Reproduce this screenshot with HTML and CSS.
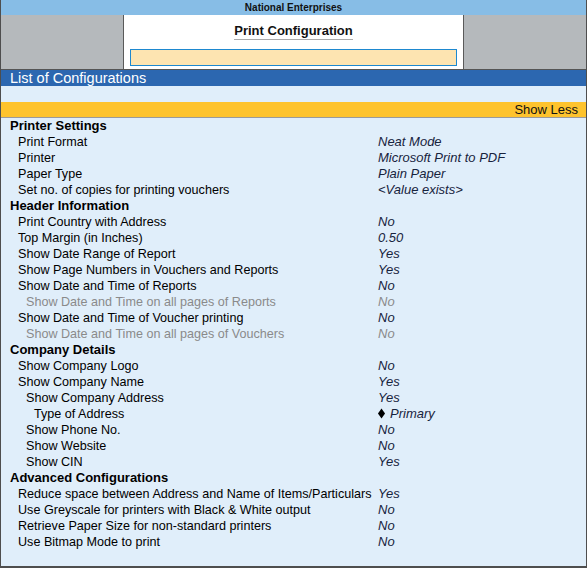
FILE: index.html
```html
<!DOCTYPE html>
<html>
<head>
<meta charset="utf-8">
<link rel="stylesheet" href="styles.css">
</head>
<body>
<div class="app">
  <div class="topbar">National Enterprises</div>
  <div class="titlearea">
    <div class="side"></div>
    <div class="panel">
      <div class="title"><span>Print Configuration</span></div>
      <div class="input"></div>
    </div>
    <div class="side"></div>
  </div>
  <div class="listhead">List of Configurations</div>
  <div class="blank"></div>
  <div class="showless">Show Less</div>
  <div class="rows">
    <div class="row sec"><span class="lbl">Printer Settings</span><span class="val"></span></div>
    <div class="row l1"><span class="lbl">Print Format</span><span class="val">Neat Mode</span></div>
    <div class="row l1"><span class="lbl">Printer</span><span class="val">Microsoft Print to PDF</span></div>
    <div class="row l1"><span class="lbl">Paper Type</span><span class="val">Plain Paper</span></div>
    <div class="row l1"><span class="lbl">Set no. of copies for printing vouchers</span><span class="val">&lt;Value exists&gt;</span></div>
    <div class="row sec"><span class="lbl">Header Information</span><span class="val"></span></div>
    <div class="row l1"><span class="lbl">Print Country with Address</span><span class="val">No</span></div>
    <div class="row l1"><span class="lbl">Top Margin (in Inches)</span><span class="val">0.50</span></div>
    <div class="row l1"><span class="lbl">Show Date Range of Report</span><span class="val">Yes</span></div>
    <div class="row l1"><span class="lbl">Show Page Numbers in Vouchers and Reports</span><span class="val">Yes</span></div>
    <div class="row l1"><span class="lbl">Show Date and Time of Reports</span><span class="val">No</span></div>
    <div class="row l2 dis"><span class="lbl">Show Date and Time on all pages of Reports</span><span class="val">No</span></div>
    <div class="row l1"><span class="lbl">Show Date and Time of Voucher printing</span><span class="val">No</span></div>
    <div class="row l2 dis"><span class="lbl">Show Date and Time on all pages of Vouchers</span><span class="val">No</span></div>
    <div class="row sec"><span class="lbl">Company Details</span><span class="val"></span></div>
    <div class="row l1"><span class="lbl">Show Company Logo</span><span class="val">No</span></div>
    <div class="row l1"><span class="lbl">Show Company Name</span><span class="val">Yes</span></div>
    <div class="row l2"><span class="lbl">Show Company Address</span><span class="val">Yes</span></div>
    <div class="row l3"><span class="lbl">Type of Address</span><span class="val"><span class="dia"></span>Primary</span></div>
    <div class="row l2"><span class="lbl">Show Phone No.</span><span class="val">No</span></div>
    <div class="row l2"><span class="lbl">Show Website</span><span class="val">No</span></div>
    <div class="row l2"><span class="lbl">Show CIN</span><span class="val">Yes</span></div>
    <div class="row sec"><span class="lbl">Advanced Configurations</span><span class="val"></span></div>
    <div class="row l1"><span class="lbl">Reduce space between Address and Name of Items/Particulars</span><span class="val">Yes</span></div>
    <div class="row l1"><span class="lbl">Use Greyscale for printers with Black &amp; White output</span><span class="val">No</span></div>
    <div class="row l1"><span class="lbl">Retrieve Paper Size for non-standard printers</span><span class="val">No</span></div>
    <div class="row l1"><span class="lbl">Use Bitmap Mode to print</span><span class="val">No</span></div>
  </div>
</div>
</body>
</html>
```

FILE: styles.css
```css
html, body {
  margin: 0;
  padding: 0;
}
body {
  font-family: "Liberation Sans", Arial, sans-serif;
  font-size: 12.6px;
  color: #000;
  background: #e0eefa;
}
.app {
  width: 587px;
  height: 568px;
  box-sizing: border-box;
  border-left: 1px solid #4e4e4e;
  border-right: 1px solid #4e4e4e;
  border-bottom: 2px solid #4e4e4e;
  display: flex;
  flex-direction: column;
  background: #e0eefa;
}
.topbar {
  height: 15px;
  line-height: 15px;
  background: #87bde6;
  text-align: center;
  font-weight: bold;
  font-size: 10px;
  color: #111;
}
.titlearea {
  height: 54px;
  display: flex;
  background: #b5b9bc;
}
.side {
  flex: 1;
}
.panel {
  width: 327px;
  background: #fff;
  border-left: 1px solid #5a5a5a;
  border-right: 1px solid #5a5a5a;
  padding: 8px 6px 0 6px;
  display: flex;
  flex-direction: column;
}
.title {
  display: flex;
  justify-content: center;
}
.title span {
  display: block;
  font-weight: bold;
  font-size: 13px;
  line-height: 16px;
  border-bottom: 1px solid #aaa;
  color: #111;
}
.input {
  margin-top: 9px;
  height: 15px;
  background: #fde4b1;
  border: 1px solid #1e88cf;
}
.listhead {
  height: 16px;
  line-height: 16px;
  border-top: 1px solid #555;
  background: #2c67b0;
  color: #fff;
  font-size: 14.5px;
  padding-left: 9px;
}
.blank {
  height: 16px;
}
.showless {
  height: 15px;
  line-height: 16px;
  background: #fec32d;
  border-bottom: 1px solid #9a9a9a;
  text-align: right;
  padding-right: 8px;
  font-size: 13px;
  color: #111;
}
.rows {
  display: flex;
  flex-direction: column;
}
.row {
  display: grid;
  grid-template-columns: 377px 1fr;
  height: 16px;
  line-height: 16px;
  white-space: nowrap;
}
.sec .lbl {
  font-weight: bold;
  font-size: 13px;
  padding-left: 9px;
}
.l1 .lbl { padding-left: 17px; }
.l2 .lbl { padding-left: 25px; }
.l3 .lbl { padding-left: 33px; }
.val {
  font-style: italic;
  font-size: 13px;
  color: #17233d;
}
.dis .lbl, .dis .val {
  color: #8a8a8a;
}
.dia {
  display: inline-block;
  width: 5px;
  height: 5px;
  background: #000;
  transform: scaleY(1.4) rotate(45deg);
  margin: 0 6px 2px 1px;
  vertical-align: middle;
}
```
